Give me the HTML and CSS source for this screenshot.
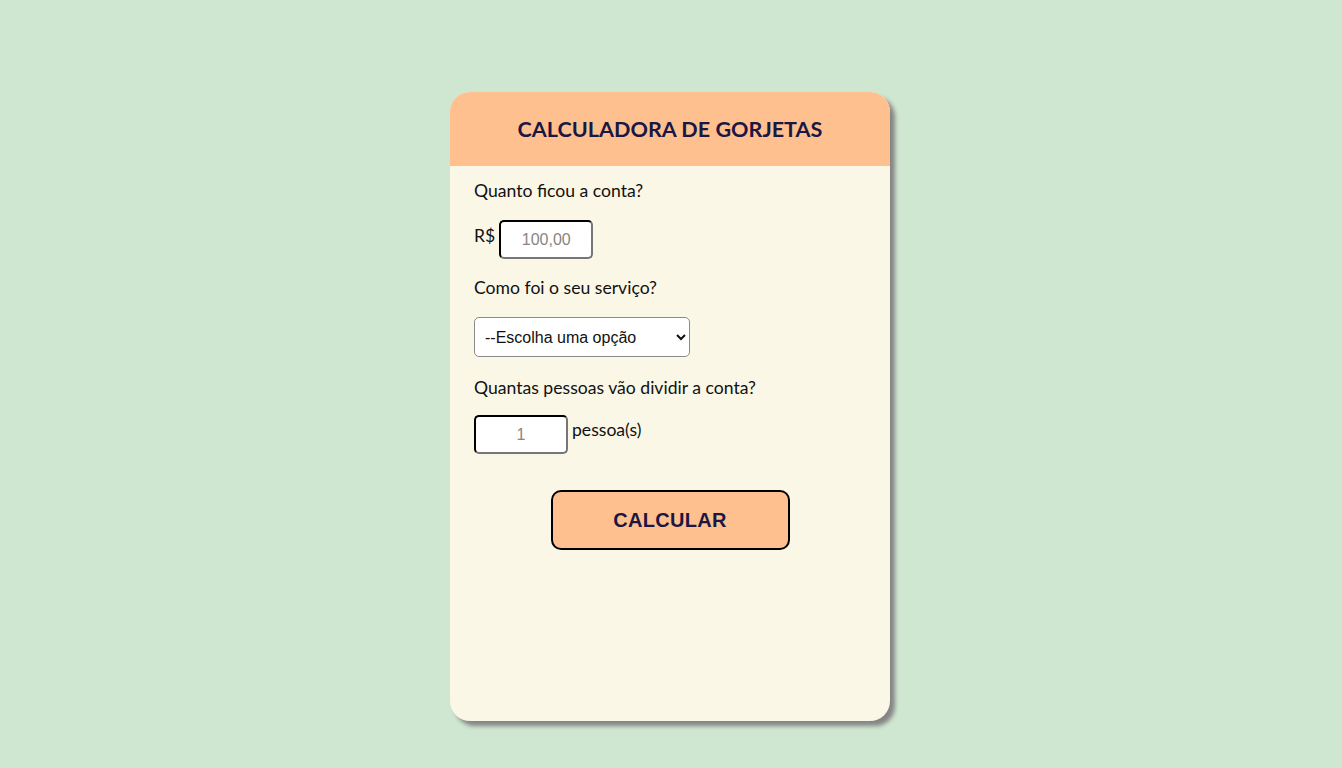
FILE: index.html
```html
<!DOCTYPE html>
<html lang="pt-BR">
<head>
<meta charset="utf-8">
<title>Calculadora de Gorjetas</title>
<link rel="stylesheet" href="styles.css">
</head>
<body>
<main class="card">
  <header class="card-header">
    <h1>CALCULADORA DE GORJETAS</h1>
  </header>
  <section class="card-body">
    <p class="label">Quanto ficou a conta?</p>
    <div class="row row-bill">
      <span class="prefix">R$</span>
      <input class="num" type="text" placeholder="100,00">
    </div>
    <p class="label">Como foi o seu serviço?</p>
    <div class="row row-service">
      <select class="sel">
        <option>--Escolha uma opção</option>
      </select>
    </div>
    <p class="label">Quantas pessoas vão dividir a conta?</p>
    <div class="row row-people">
      <input class="num" type="text" placeholder="1">
      <span class="suffix">pessoa(s)</span>
    </div>
    <div class="actions">
      <button class="btn" type="button">CALCULAR</button>
    </div>
  </section>
</main>
</body>
</html>
```
FILE: styles.css
```css
html, body {
  margin: 0;
  padding: 0;
}
body {
  background: #cfe6d1;
  font-family: Lato, "Liberation Sans", sans-serif;
  min-height: 768px;
  display: flex;
  justify-content: center;
  align-items: flex-start;
  padding-right: 2px;
  box-sizing: border-box;
}
.card {
  margin-top: 92px;
  width: 440px;
  height: 629px;
  background: #faf7e7;
  border-radius: 20px;
  box-shadow: 5px 5px 4px #858585;
  overflow: hidden;
  display: flex;
  flex-direction: column;
}
.card-header {
  background: #ffc08f;
  height: 74px;
  display: flex;
  align-items: center;
  justify-content: center;
}
.card-header h1 {
  margin: 0;
  font-size: 21.6px;
  font-weight: 700;
  color: #1b1642;
}
.card-body {
  padding: 12px 24px 0;
}
.label {
  margin: 0;
  font-size: 17.6px;
  line-height: 26px;
  color: #111;
}
.row {
  display: flex;
  align-items: center;
  font-size: 17.6px;
  color: #111;
}
.row-bill {
  margin: 16px 0 16px;
}
.row-service {
  margin: 16px 0 18px;
}
.row-people {
  margin: 14px 0 0;
}
.prefix {
  margin-right: 4px;
  align-self: flex-start;
  margin-top: 5px;
}
.suffix {
  margin-left: 4px;
  align-self: flex-start;
  margin-top: 4px;
}
.num {
  width: 94px;
  height: 39px;
  box-sizing: border-box;
  border: 2px inset #767676;
  border-top-color: #1b1642;
  border-left-color: #1b1642;
  border-radius: 5px;
  background: #fff;
  font-family: "Liberation Sans", Arial, sans-serif;
  font-size: 16px;
  text-align: center;
  padding: 0 8px;
}
.num::placeholder {
  color: #8a8580;
}
.sel {
  width: 216px;
  height: 40px;
  border: 1px solid #8a8a8a;
  border-radius: 5px;
  background: #fff;
  font-family: "Liberation Sans", Arial, sans-serif;
  font-size: 16px;
  color: #111;
  padding: 0 6px;
}
.actions {
  display: flex;
  justify-content: center;
  margin-top: 36px;
}
.btn {
  width: 239px;
  height: 60px;
  border: 2px solid #000;
  border-radius: 10px;
  background: #ffc08f;
  color: #1b1642;
  font-family: "Liberation Sans", Arial, sans-serif;
  font-weight: 700;
  font-size: 20px;
  letter-spacing: 0.3px;
}
```
